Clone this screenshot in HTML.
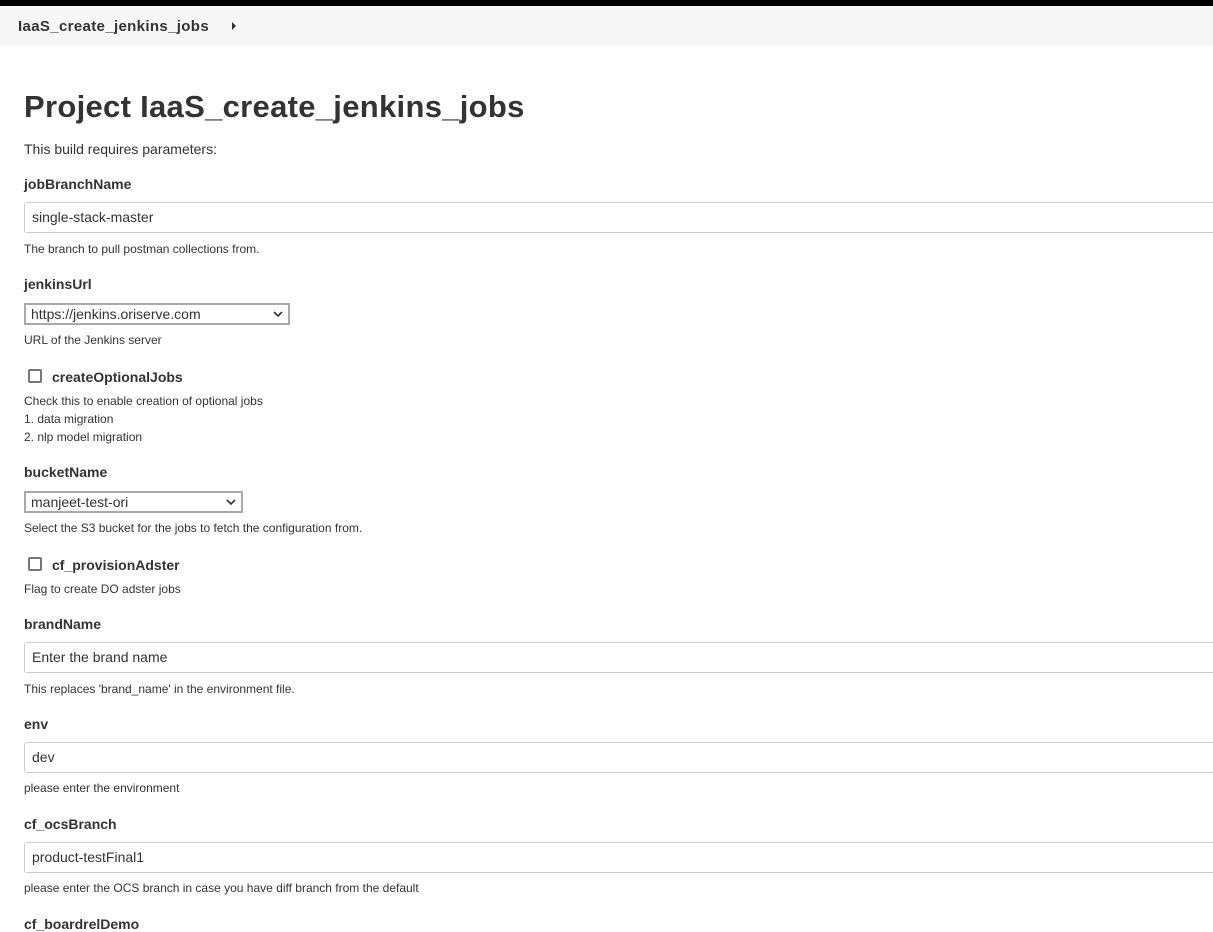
<!DOCTYPE html>
<html><head><meta charset="utf-8"><style>
*{margin:0;padding:0;box-sizing:border-box}
body{width:1213px;height:918px;overflow:hidden;background:#fff;font-family:"Liberation Sans",sans-serif;color:#333;position:relative}
.a{position:absolute;white-space:nowrap;line-height:1}
.top{position:absolute;left:0;top:0;width:1213px;height:6px;background:#000}
.bc{position:absolute;left:0;top:6px;width:1213px;height:40px;background:#f7f7f7}
.lbl{font-size:14px;font-weight:bold;color:#333}
.help{font-size:12px;color:#333}
.inp{position:absolute;left:24px;width:1200px;height:31px;border:1px solid #ccc;border-radius:3px;font-size:14px;padding-left:7px;line-height:29px;color:#333}
.sel{position:absolute;left:24px;height:22px;border:2px solid #aaa;border-radius:0;font-size:14px;padding-left:5px;line-height:18px;color:#333;background:#fff}
.sel svg{position:absolute;right:5px;top:5px}
.cb{position:absolute;left:28px;width:14px;height:14px;border:2px solid #777;border-radius:2px}
</style></head><body>
<div class="top"></div>
<div class="bc"></div>
<div class="a" style="left:18px;top:19px;font-size:15px;font-weight:bold;color:#333;letter-spacing:0.35px">IaaS_create_jenkins_jobs</div>
<svg class="a" style="left:231px;top:22px" width="6" height="8"><path d="M1 0L5 4L1 8Z" fill="#333"/></svg>
<div class="a" style="left:24px;top:91px;font-size:31px;font-weight:bold;color:#333;letter-spacing:0.3px">Project IaaS_create_jenkins_jobs</div>
<div class="a" style="left:24px;top:142px;font-size:14px">This build requires parameters:</div>

<div class="a lbl" style="left:24px;top:177px">jobBranchName</div>
<div class="inp" style="top:202px">single-stack-master</div>
<div class="a help" style="left:24px;top:243px">The branch to pull postman collections from.</div>

<div class="a lbl" style="left:24px;top:277px">jenkinsUrl</div>
<div class="sel" style="top:303px;width:266px">https://jenkins.oriserve.com<svg width="10" height="8"><path d="M1 2L5 6L9 2" stroke="#333" stroke-width="1.6" fill="none"/></svg></div>
<div class="a help" style="left:24px;top:334px">URL of the Jenkins server</div>

<div class="cb" style="top:369px"></div>
<div class="a lbl" style="left:52px;top:370px">createOptionalJobs</div>
<div class="a help" style="left:24px;top:395px">Check this to enable creation of optional jobs</div>
<div class="a help" style="left:24px;top:413px">1. data migration</div>
<div class="a help" style="left:24px;top:431px">2. nlp model migration</div>

<div class="a lbl" style="left:24px;top:465px">bucketName</div>
<div class="sel" style="top:491px;width:219px">manjeet-test-ori<svg width="10" height="8"><path d="M1 2L5 6L9 2" stroke="#333" stroke-width="1.6" fill="none"/></svg></div>
<div class="a help" style="left:24px;top:522px">Select the S3 bucket for the jobs to fetch the configuration from.</div>

<div class="cb" style="top:557px"></div>
<div class="a lbl" style="left:52px;top:558px">cf_provisionAdster</div>
<div class="a help" style="left:24px;top:583px">Flag to create DO adster jobs</div>

<div class="a lbl" style="left:24px;top:617px">brandName</div>
<div class="inp" style="top:642px">Enter the brand name</div>
<div class="a help" style="left:24px;top:683px">This replaces 'brand_name' in the environment file.</div>

<div class="a lbl" style="left:24px;top:717px">env</div>
<div class="inp" style="top:742px">dev</div>
<div class="a help" style="left:24px;top:782px">please enter the environment</div>

<div class="a lbl" style="left:24px;top:817px">cf_ocsBranch</div>
<div class="inp" style="top:842px">product-testFinal1</div>
<div class="a help" style="left:24px;top:882px">please enter the OCS branch in case you have diff branch from the default</div>
<div class="a lbl" style="left:24px;top:917px">cf_boardrelDemo</div>
</body></html>
